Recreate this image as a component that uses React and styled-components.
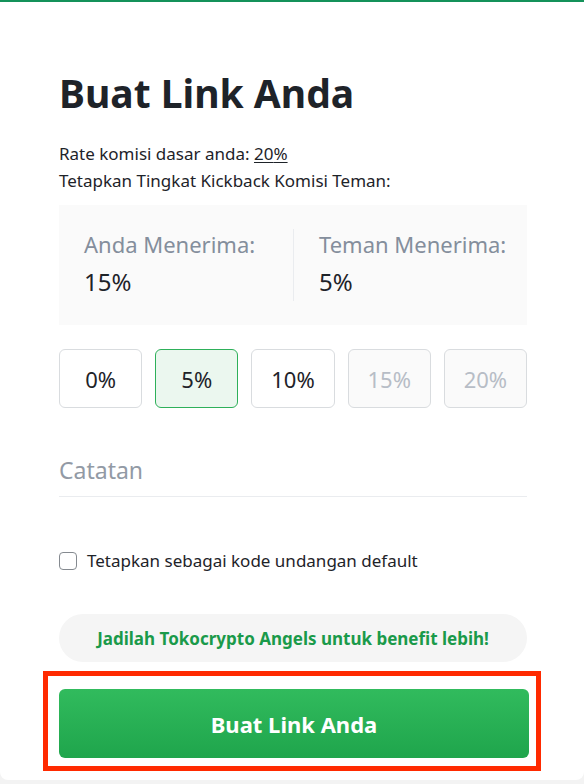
import React, { useState } from 'react';
import styled, { createGlobalStyle } from 'styled-components';

const GlobalStyle = createGlobalStyle`
  html, body {
    margin: 0;
    padding: 0;
    background: #f3f3f3;
    font-family: 'Noto Sans', 'Roboto', sans-serif;
  }
`;

const Card = styled.div`
  box-sizing: border-box;
  width: 584px;
  height: 780px;
  background: #fff;
  border-top: 2px solid #14925a;
  border-radius: 0 0 8px 8px;
  padding: 67px 57px 0 59px;
`;

const Title = styled.h1`
  margin: 0;
  font-size: 39px;
  line-height: 48px;
  font-weight: 700;
  color: #1e2329;
`;

const InfoLine = styled.div`
  margin-top: ${(p) => (p.first ? '23px' : '0')};
  font-size: 17px;
  line-height: 27px;
  color: #1e2329;

  u {
    text-underline-offset: 2px;
  }
`;

const ShareBox = styled.div`
  margin-top: 11px;
  height: 120px;
  box-sizing: border-box;
  padding: 24px 0;
  background: #fafafa;
  display: grid;
  grid-template-columns: 1fr 1fr;
`;

const ShareCol = styled.div`
  min-width: 0;
  padding: 0 0 0 25px;
  white-space: nowrap;
  border-left: ${(p) => (p.divided ? '1px solid #eaecef' : 'none')};
`;

const ShareLabel = styled.div`
  font-size: 22px;
  line-height: 30px;
  color: #848e9c;
`;

const ShareValue = styled.div`
  margin-top: 7px;
  font-size: 24px;
  line-height: 32px;
  color: #1e2329;
`;

const RateRow = styled.div`
  margin-top: 24px;
  display: grid;
  grid-template-columns: repeat(5, 1fr);
  gap: 13px;
`;

const RateButton = styled.button`
  height: 59px;
  border-radius: 6px;
  font-family: inherit;
  font-size: 22px;
  cursor: ${(p) => (p.disabled ? 'default' : 'pointer')};
  border: 1px solid ${(p) => (p.active ? '#2eb05a' : '#d9dcdf')};
  background: ${(p) => (p.active ? '#ebf7ef' : p.disabled ? '#fafafa' : '#fff')};
  color: ${(p) => (p.disabled ? '#b7bdc6' : '#1e2329')};
`;

const NoteInput = styled.input`
  display: block;
  width: 100%;
  box-sizing: border-box;
  margin-top: 36px;
  height: 53px;
  border: none;
  border-bottom: 1px solid #eaecef;
  outline: none;
  padding: 0;
  font-family: inherit;
  font-size: 23px;
  color: #1e2329;

  &::placeholder {
    color: #929aa5;
  }
`;

const CheckRow = styled.label`
  margin-top: 52px;
  display: flex;
  align-items: center;
  gap: 10px;
  font-size: 17px;
  line-height: 24px;
  color: #1e2329;
`;

const CheckBox = styled.span`
  width: 18px;
  height: 18px;
  box-sizing: border-box;
  border: 1px solid #858a90;
  border-radius: 4px;
  background: ${(p) => (p.checked ? '#2eb05a' : '#fff')};
`;

const AngelPill = styled.div`
  margin-top: 41px;
  height: 48px;
  border-radius: 24px;
  background: #f5f5f5;
  display: flex;
  align-items: center;
  justify-content: center;
  font-size: 17px;
  font-weight: 700;
  color: #1a9a4a;
`;

const HighlightFrame = styled.div`
  margin: 9px -14px 0 -16px;
  border: 5px solid #ff2a00;
  padding: 13px 7px 8px 11px;
`;

const SubmitButton = styled.button`
  width: 100%;
  height: 69px;
  border: none;
  border-radius: 6px;
  background: linear-gradient(180deg, #31bb5d 0%, #1fa54c 100%);
  color: #fff;
  font-family: inherit;
  font-size: 22px;
  font-weight: 700;
  cursor: pointer;
`;

const rates = [
  { value: 0 },
  { value: 5 },
  { value: 10 },
  { value: 15, disabled: true },
  { value: 20, disabled: true },
];

export default function App() {
  const [friend, setFriend] = useState(5);
  const [isDefault, setIsDefault] = useState(false);
  const base = 20;

  return (
    <>
      <GlobalStyle />
      <Card>
        <Title>Buat Link Anda</Title>
        <InfoLine first>
          Rate komisi dasar anda: <u>{base}%</u>
        </InfoLine>
        <InfoLine>Tetapkan Tingkat Kickback Komisi Teman:</InfoLine>

        <ShareBox>
          <ShareCol>
            <ShareLabel>Anda Menerima:</ShareLabel>
            <ShareValue>{base - friend}%</ShareValue>
          </ShareCol>
          <ShareCol divided>
            <ShareLabel>Teman Menerima:</ShareLabel>
            <ShareValue>{friend}%</ShareValue>
          </ShareCol>
        </ShareBox>

        <RateRow>
          {rates.map((r) => (
            <RateButton
              key={r.value}
              active={friend === r.value}
              disabled={r.disabled}
              onClick={() => setFriend(r.value)}
            >
              {r.value}%
            </RateButton>
          ))}
        </RateRow>

        <NoteInput placeholder="Catatan" />

        <CheckRow onClick={() => setIsDefault(!isDefault)}>
          <CheckBox checked={isDefault} />
          Tetapkan sebagai kode undangan default
        </CheckRow>

        <AngelPill>Jadilah Tokocrypto Angels untuk benefit lebih!</AngelPill>

        <HighlightFrame>
          <SubmitButton>Buat Link Anda</SubmitButton>
        </HighlightFrame>
      </Card>
    </>
  );
}
